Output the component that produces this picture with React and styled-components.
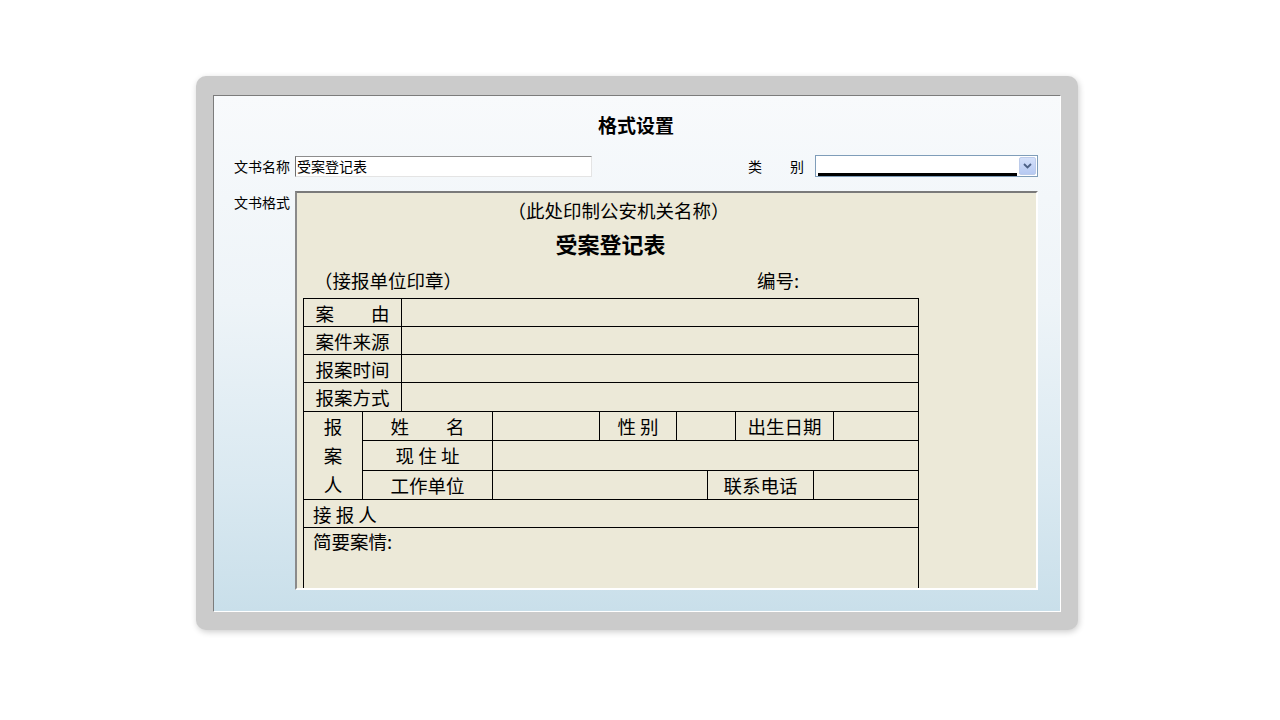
import React from "react";
import styled, { createGlobalStyle } from "styled-components";

const GlobalStyle = createGlobalStyle`
  body {
    margin: 0;
    background: #ffffff;
    font-family: "Noto Sans CJK SC", "DejaVu Sans", sans-serif;
    color: #000;
  }
`;

const Page = styled.div`
  width: 1280px;
  height: 720px;
  padding: 76px 0 0 196px;
  box-sizing: border-box;
`;

const Frame = styled.div`
  width: 882px;
  height: 554px;
  box-sizing: border-box;
  padding: 19px 17px 18px 17px;
  background: #cbcbcb;
  border-radius: 10px;
  box-shadow: 1px 2px 6px rgba(0, 0, 0, 0.2);
`;

const Panel = styled.div`
  height: 100%;
  box-sizing: border-box;
  border: 1px solid #ffffff;
  border-top-color: #7c7c7c;
  border-left-color: #7c7c7c;
  background: linear-gradient(to bottom, #f8fafc 0%, #eef4f8 40%, #dae9f1 75%, #c9dfea 100%);
  padding: 16px 22px 21px 20px;
  display: flex;
  flex-direction: column;
`;

const Title = styled.h1`
  margin: 0;
  font-size: 19px;
  line-height: 25px;
  font-weight: bold;
  text-align: center;
`;

const FieldRow = styled.div`
  display: flex;
  align-items: ${(p) => (p.$top ? "flex-start" : "center")};
  margin-top: ${(p) => p.$gap}px;
`;

const Label = styled.span`
  width: 61px;
  flex-shrink: 0;
  font-size: 14px;
  line-height: 20px;
  margin-top: ${(p) => (p.$top ? "1px" : "0")};
  white-space: pre;
`;

const TextInput = styled.div`
  width: 297px;
  height: 21px;
  box-sizing: border-box;
  background: #fff;
  border: 1px solid #e4e4e4;
  border-top-color: #8d8d8d;
  border-left-color: #6f6f6f;
  font-size: 14px;
  line-height: 18px;
  padding-left: 1px;
`;

const TypeLabel = styled.span`
  margin-left: auto;
  margin-right: 11px;
  font-size: 14px;
  line-height: 20px;
  white-space: pre;
`;

const Select = styled.div`
  width: 223px;
  height: 22px;
  box-sizing: border-box;
  background: #fff;
  border: 1px solid #7f9db9;
  display: flex;
  align-items: center;
  padding: 1px 1px 1px 2px;
`;

const SelectValue = styled.div`
  flex: 1;
  height: 100%;
  box-sizing: border-box;
  border-bottom: 3px solid #000;
  margin-right: 2px;
  margin-bottom: -2px;
`;

const SelectButton = styled.div`
  width: 17px;
  height: 18px;
  border-radius: 2px;
  background: linear-gradient(to bottom, #d4e0fa, #b6c9f2);
  border: 1px solid #bccbea;
  box-sizing: border-box;
  display: flex;
  align-items: center;
  justify-content: center;
`;

const DocBox = styled.div`
  flex: 1;
  min-width: 0;
  box-sizing: border-box;
  height: 399px;
  overflow: hidden;
  background: #ece9d8;
  border: 2px solid #ffffff;
  border-top-color: #7a7a7a;
  border-left-color: #8a8a8a;
  padding: 0 0 0 6px;
  font-size: 18.5px;
`;

const DocInner = styled.div`
  width: 615px;
`;

const OrgLine = styled.div`
  text-align: center;
  padding-left: 16px;
  line-height: 24px;
  margin-top: 5px;
`;

const DocTitle = styled.div`
  text-align: center;
  font-size: 22px;
  font-weight: bold;
  line-height: 30px;
  margin-top: 6px;
`;

const StampLine = styled.div`
  display: flex;
  line-height: 24px;
  margin-top: 10px;
  margin-bottom: 6px;
`;

const Stamp = styled.span`
  width: 454px;
  padding-left: 11px;
  box-sizing: border-box;
`;

const Sheet = styled.table`
  width: 615px;
  table-layout: fixed;
  border-collapse: collapse;
  font-size: 18.5px;
`;

const Cell = styled.td`
  border: 1px solid #000;
  height: ${(p) => p.$h || 27}px;
  padding: ${(p) => (p.$left ? "0 0 0 9px" : "0")};
  text-align: ${(p) => (p.$left ? "left" : "center")};
  vertical-align: ${(p) => (p.$tall ? "top" : "middle")};
  line-height: 26px;
  white-space: pre;
  overflow: hidden;
`;

const Stacked = styled.div`
  display: flex;
  flex-direction: column;
  line-height: 29px;
`;

const widths = [59, 39, 91, 107, 77, 31, 28, 78, 20, 85];

const simpleRows = ["案　　由", "案件来源", "报案时间", "报案方式"];

const Chevron = () => (
  <svg width="9" height="6" viewBox="0 0 9 6">
    <path d="M1 1 L4.5 4.5 L8 1" fill="none" stroke="#4d6185" strokeWidth="1.8" />
  </svg>
);

export default function App() {
  return (
    <Page>
      <GlobalStyle />
      <Frame>
        <Panel>
          <Title>格式设置</Title>
          <FieldRow $gap={18}>
            <Label>文书名称</Label>
            <TextInput>受案登记表</TextInput>
            <TypeLabel>类　　别</TypeLabel>
            <Select>
              <SelectValue />
              <SelectButton>
                <Chevron />
              </SelectButton>
            </Select>
          </FieldRow>
          <FieldRow $gap={14} $top>
            <Label $top>文书格式</Label>
            <DocBox>
              <DocInner>
                <OrgLine>（此处印制公安机关名称）</OrgLine>
                <DocTitle>受案登记表</DocTitle>
                <StampLine>
                  <Stamp>（接报单位印章）</Stamp>
                  <span>编号:</span>
                </StampLine>
                <Sheet>
                  <colgroup>
                    {widths.map((w, i) => (
                      <col key={i} style={{ width: w }} />
                    ))}
                  </colgroup>
                  <tbody>
                    {simpleRows.map((r, i) => (
                      <tr key={r}>
                        <Cell colSpan={2} $h={i === 3 ? 28 : 27}>{r}</Cell>
                        <Cell colSpan={8} />
                      </tr>
                    ))}
                    <tr>
                      <Cell rowSpan={3}>
                        <Stacked>
                          <span>报</span>
                          <span>案</span>
                          <span>人</span>
                        </Stacked>
                      </Cell>
                      <Cell colSpan={2} $h={28}>姓　　名</Cell>
                      <Cell />
                      <Cell>性 别</Cell>
                      <Cell colSpan={2} />
                      <Cell colSpan={2}>出生日期</Cell>
                      <Cell />
                    </tr>
                    <tr>
                      <Cell colSpan={2} $h={28}>现 住 址</Cell>
                      <Cell colSpan={7} />
                    </tr>
                    <tr>
                      <Cell colSpan={2} $h={28}>工作单位</Cell>
                      <Cell colSpan={3} />
                      <Cell colSpan={2}>联系电话</Cell>
                      <Cell colSpan={2} />
                    </tr>
                    <tr>
                      <Cell colSpan={10} $left>接 报 人</Cell>
                    </tr>
                    <tr>
                      <Cell colSpan={10} $left $tall $h={120}>简要案情:</Cell>
                    </tr>
                  </tbody>
                </Sheet>
              </DocInner>
            </DocBox>
          </FieldRow>
        </Panel>
      </Frame>
    </Page>
  );
}
